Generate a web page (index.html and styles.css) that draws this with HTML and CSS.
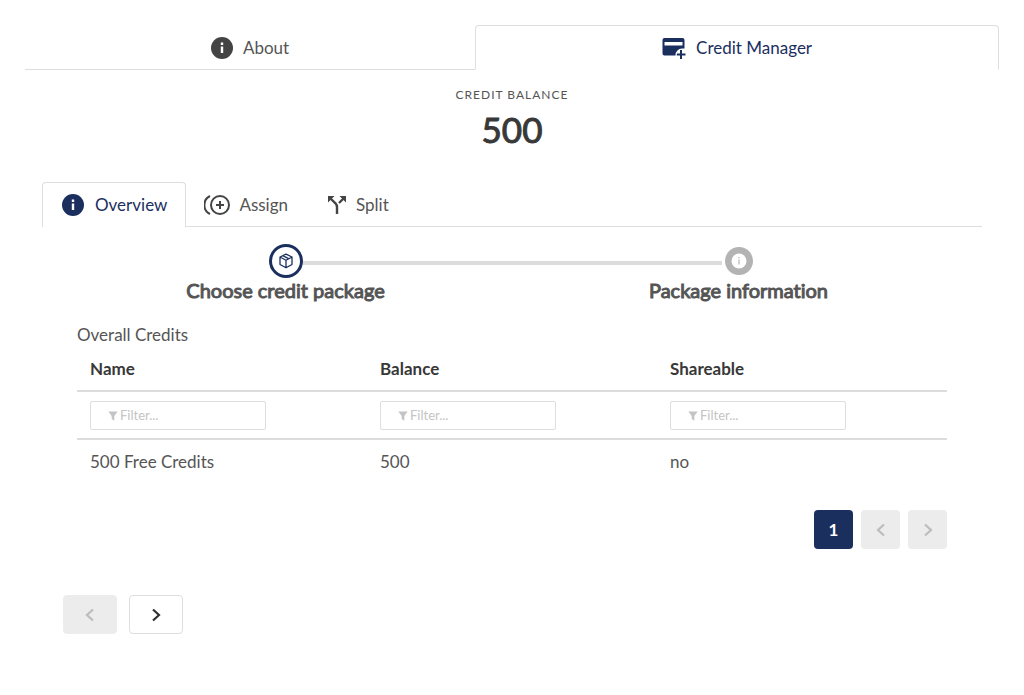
FILE: index.html
```html
<!DOCTYPE html>
<html lang="en">
<head>
<meta charset="utf-8">
<meta name="viewport" content="width=device-width, initial-scale=1">
<title>Credit Manager</title>
<link rel="stylesheet" href="styles.css">
</head>
<body>
<main class="page">
  <div class="main-tabs" role="tablist">
    <button class="main-tab" role="tab" aria-selected="false">
      <svg class="icon" viewBox="0 0 22 22" aria-hidden="true"><circle cx="11" cy="11" r="11" fill="currentColor"/><path d="M11 9.500v6.500M11 5.600v2.400" stroke="#fff" stroke-width="2.400"/></svg>
      About
    </button>
    <button class="main-tab active" role="tab" aria-selected="true">
      <svg class="icon-card" viewBox="0 0 24 22" aria-hidden="true"><path fill="currentColor" fill-rule="evenodd" d="M2.500 1h18A2 2 0 0 1 22.500 3v8.500H20a6.500 6.500 0 0 0-6.500 6.500v.5H2.500A2 2 0 0 1 .5 16.500V3a2 2 0 0 1 2-2zM2.500 5v3.500h18V5z"/><path d="M19 13V22M14.800 17.500h8.700" stroke="currentColor" stroke-width="2"/></svg>
      Credit Manager
    </button>
  </div>

  <section class="balance">
    <div class="balance-label">Credit Balance</div>
    <div class="balance-value">500</div>
  </section>

  <section class="panel">
    <div class="sub-tabs" role="tablist">
      <button class="sub-tab active" role="tab" aria-selected="true">
        <svg class="icon" viewBox="0 0 22 22" aria-hidden="true"><circle cx="11" cy="11" r="11" fill="currentColor"/><path d="M11 9.500v6.500M11 5.600v2.400" stroke="#fff" stroke-width="2.400"/></svg>
        Overview
      </button>
      <button class="sub-tab" role="tab" aria-selected="false">
        <svg class="icon-assign" viewBox="0 0 26 22" aria-hidden="true" fill="none" stroke="currentColor" stroke-width="2"><circle cx="16" cy="11" r="9"/><path d="M16 7v8M12 11h8M6 2a10 10 0 0 0 0 18"/></svg>
        Assign
      </button>
      <button class="sub-tab" role="tab" aria-selected="false">
        <svg class="icon-split" viewBox="0 0 20 20" aria-hidden="true"><path d="M12.500 1H19v6.500zM7.500 1H1v6.500z" fill="currentColor"/><path d="M16.500 3.500L12 8M3.500 3.500L8.500 8.300Q10 9.800 10 12v7" fill="none" stroke="currentColor" stroke-width="2.400"/></svg>
        Split
      </button>
    </div>

    <ol class="steps">
      <li class="step">
        <span class="dot current"><svg class="icon-box" viewBox="0 0 14 16" aria-hidden="true" fill="none" stroke="currentColor" stroke-width="1.300" stroke-linejoin="round"><path d="M7 1.200l6 2.800v7.500L7 14.800l-6-3.300V4zM1 4l6 3.200L13 4M7 7.200v7.600M3.800 2.700l6.200 3.100"/></svg></span>
        <span class="step-title">Choose credit package</span>
      </li>
      <li class="step">
        <span class="dot upcoming"><svg class="icon-next" viewBox="0 0 28 28" aria-hidden="true"><circle cx="14" cy="14" r="7.500" fill="#fff"/><path d="M14 12.500v5M14 10v1.300" stroke="#b3b3b3" stroke-width="1.200"/></svg></span>
        <span class="step-title">Package information</span>
      </li>
    </ol>

    <div class="credits">
      <h2 class="credits-title">Overall Credits</h2>
      <table class="table">
        <thead>
          <tr><th>Name</th><th>Balance</th><th>Shareable</th></tr>
          <tr class="filters">
            <td><label class="filter"><svg class="icon-filter" viewBox="0 0 10 10" aria-hidden="true"><path d="M.3.500h9.400L6.300 5v4.800L3.700 8V5z" fill="currentColor"/></svg><input type="text" placeholder="Filter..." aria-label="Filter by name"></label></td>
            <td><label class="filter"><svg class="icon-filter" viewBox="0 0 10 10" aria-hidden="true"><path d="M.3.500h9.400L6.300 5v4.800L3.700 8V5z" fill="currentColor"/></svg><input type="text" placeholder="Filter..." aria-label="Filter by balance"></label></td>
            <td><label class="filter"><svg class="icon-filter" viewBox="0 0 10 10" aria-hidden="true"><path d="M.3.500h9.400L6.300 5v4.800L3.700 8V5z" fill="currentColor"/></svg><input type="text" placeholder="Filter..." aria-label="Filter by shareable"></label></td>
          </tr>
        </thead>
        <tbody>
          <tr><td>500 Free Credits</td><td>500</td><td>no</td></tr>
        </tbody>
      </table>
      <nav class="pagination" aria-label="Pages">
        <button class="page-button selected" aria-current="page">1</button>
        <button class="page-button" disabled aria-label="Previous page"><svg class="chevron" viewBox="0 0 12 14"><path d="M9 1.500L3 7l6 5.500"/></svg></button>
        <button class="page-button" disabled aria-label="Next page"><svg class="chevron" viewBox="0 0 12 14"><path d="M3 1.500L9 7l-6 5.500"/></svg></button>
      </nav>
    </div>

    <div class="step-nav">
      <button class="step-button" disabled aria-label="Previous step"><svg class="chevron" viewBox="0 0 12 14"><path d="M9 1.500L3 7l6 5.500"/></svg></button>
      <button class="step-button" aria-label="Next step"><svg class="chevron" viewBox="0 0 12 14"><path d="M3 1.500L9 7l-6 5.500"/></svg></button>
    </div>
  </section>
</main>
</body>
</html>
```
FILE: styles.css
```css
* { box-sizing: border-box; }

body {
  margin: 0;
  background: #fff;
  color: #555;
  font: 17px/24px Lato, sans-serif;
  font-variant-ligatures: none;
}

button {
  font: inherit;
  color: inherit;
  background: none;
  border: 0;
  padding: 0;
  margin: 0;
}

svg { display: block; flex: none; }

.page { padding: 25px; }

.main-tabs { display: flex; }

.main-tab {
  flex: 1 1 auto;
  height: 45px;
  display: flex;
  align-items: center;
  justify-content: center;
  gap: 10px;
  padding-top: 1px;
  border-bottom: 1px solid #dedede;
}

.main-tab.active {
  padding-top: 0;
  color: #1b2f5f;
  border: 1px solid #dedede;
  border-bottom-color: transparent;
  border-radius: 4px 4px 0 0;
}

.icon { width: 22px; height: 22px; }
.icon-card { width: 24px; height: 22px; }
.icon-assign { width: 26px; height: 22px; }
.icon-split { width: 20px; height: 20px; }
.icon-box { width: 14px; height: 16px; }
.icon-next { width: 28px; height: 28px; }
.icon-filter { width: 10px; height: 10px; }

.main-tab .icon,
.sub-tab:not(.active) svg { color: #444; }

.balance {
  padding-top: 16px;
  text-align: center;
}

.balance-label {
  font-size: 12px;
  line-height: 18px;
  letter-spacing: 1px;
  text-transform: uppercase;
}

.balance-value {
  margin-top: 3px;
  color: #383838;
  font-size: 35px;
  line-height: 44px;
  -webkit-text-stroke: 1px;
}

.panel { padding: 31px 17px 0; }

.sub-tabs {
  display: flex;
  background: linear-gradient(#dedede, #dedede) bottom / 100% 1px no-repeat;
}

.sub-tab {
  height: 45px;
  display: flex;
  align-items: center;
  gap: 9px;
  padding: 0 21px 0 18px;
}

.sub-tab.active {
  gap: 11px;
  padding: 0 18px 0 19px;
  color: #1b2f5f;
  background: #fff;
  border: 1px solid #dedede;
  border-bottom: 0;
  border-radius: 4px 4px 0 0;
}

.steps {
  display: grid;
  grid-template-columns: 1fr 1fr;
  list-style: none;
  margin: 0;
  padding: 17px 17px 0;
}

.step {
  display: flex;
  flex-direction: column;
  align-items: center;
  position: relative;
}

.step + .step::before {
  content: "";
  position: absolute;
  top: 17px;
  left: calc(-50% + 17px);
  right: calc(50% + 17px);
  height: 4px;
  background: #dcdcdc;
}

.dot {
  width: 34px;
  height: 34px;
  display: grid;
  place-items: center;
  border-radius: 50%;
}

.dot.current { color: #1b2f5f; border: 3px solid; }

.dot.upcoming {
  background: #b3b3b3;
  border: 3px solid #fff;
}

.step-title {
  font-size: 20px;
  line-height: 24px;
  -webkit-text-stroke: 1px;
}

.credits { padding: 21px 35px 0; }

.credits-title {
  margin: 0;
  font-size: 17px;
  line-height: 24px;
  font-weight: 400;
}

.table {
  width: 100%;
  table-layout: fixed;
  border-collapse: collapse;
}

.table th,
.table td {
  height: 44px;
  padding: 0 13px;
  text-align: left;
}

.table th {
  color: #383838;
  font-weight: 700;
}

.table .filters td {
  height: 48px;
  border-top: 2px solid #dcdcdc;
  border-bottom: 2px solid #dcdcdc;
}

.filter {
  position: relative;
  display: block;
  max-width: 176px;
}

.filter .icon-filter {
  position: absolute;
  top: 10px;
  left: 18px;
  color: #c4c4c4;
}

.filter input {
  display: block;
  width: 100%;
  height: 29px;
  padding: 0 8px 0 29px;
  border: 1px solid #dedede;
  border-radius: 2px;
  outline: 0;
  font: 13px Lato, sans-serif;
}

.filter input::placeholder { color: #c4c4c4; }

.pagination {
  display: flex;
  justify-content: flex-end;
  gap: 8px;
  margin-top: 27px;
}

.page-button,
.step-button {
  display: grid;
  place-items: center;
  width: 39px;
  height: 39px;
  border-radius: 4px;
}

.page-button.selected {
  background: #1b2f5f;
  color: #fff;
  font-weight: 700;
}

.page-button:disabled,
.step-button:disabled {
  background: #ececec;
  border-color: #ececec;
  color: #bcbcbc;
}

.chevron {
  width: 12px;
  height: 14px;
  fill: none;
  stroke: currentColor;
  stroke-width: 2.2;
}

.step-nav {
  display: flex;
  gap: 12px;
  padding: 46px 21px 0;
}

.step-button {
  width: 54px;
  border: 1px solid #dedede;
  color: #303030;
}
```
